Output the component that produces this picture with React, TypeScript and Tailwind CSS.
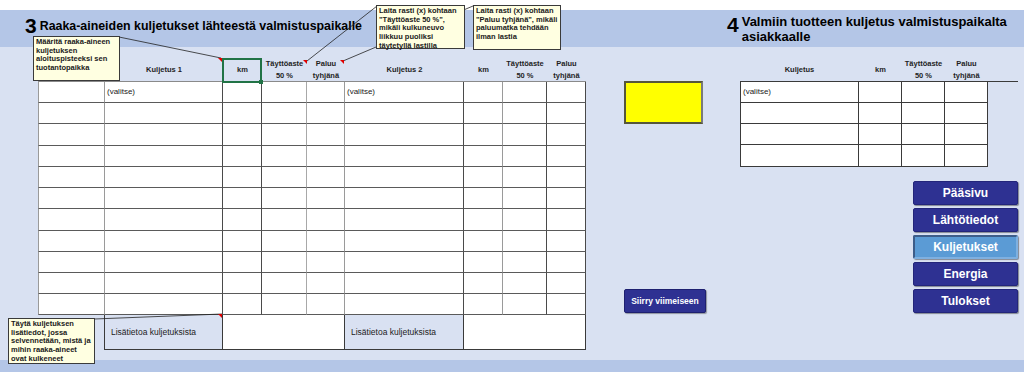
import React from "react";

const leftCols = [
  "w-[67px] border-l border-l-[#9a9a9a] border-r-[#9a9a9a]",
  "w-[118px] border-r-[#4a4a4a]",
  "w-[39px] border-r-[#4a4a4a]",
  "w-[45px] border-r-[#a8a8a8]",
  "w-[38px] border-r-[#9a9a9a]",
  "w-[119px] border-r-[#4a4a4a]",
  "w-[39px] border-r-[#9a9a9a]",
  "w-[44px] border-r-[#4a4a4a]",
  "w-[39px] border-r-[#4a4a4a]",
];

const leftHeads = [
  "",
  "Kuljetus 1",
  "km",
  "Täyttöaste\n50 %",
  "Paluu\ntyhjänä",
  "Kuljetus 2",
  "km",
  "Täyttöaste\n50 %",
  "Paluu\ntyhjänä",
];

const leftRows = [
  "h-[21px]", "h-[21px]", "h-[22px]", "h-[21px]", "h-[21px]", "h-[21px]",
  "h-[22px]", "h-[21px]", "h-[21px]", "h-[21px]", "h-[21px]",
];

const rightCols = [
  "w-[119px] border-l border-l-[#3a3a3a] border-r-[#3a3a3a]",
  "w-[43px] border-r-[#3a3a3a]",
  "w-[43px] border-r-[#3a3a3a]",
  "w-[43px] border-r-[#3a3a3a]",
];
const rightHeads = ["Kuljetus", "km", "Täyttöaste\n50 %", "Paluu\ntyhjänä"];
const rightRows = ["h-[21px]", "h-[21px]", "h-[21px]", "h-[22px]"];

const navButtons = ["Pääsivu", "Lähtötiedot", "Kuljetukset", "Energia", "Tulokset"];

function HeadCell({ w, text }: { w: string; text: string }) {
  return (
    <div className={`${w} flex items-center justify-center whitespace-pre-line text-center text-[7.5px] font-bold leading-[12px] text-[#1f1f1f]`}>
      {text}
    </div>
  );
}

function Note({ className, lines }: { className: string; lines: string[] }) {
  return (
    <div className={`absolute border border-[#3a3a3a] bg-[#ffffe1] px-[2px] pt-[1px] text-[7.5px] font-bold leading-[8.7px] text-[#1a1a1a] ${className}`}>
      {lines.map((l) => (
        <div key={l} className="whitespace-nowrap">{l}</div>
      ))}
    </div>
  );
}

export default function App() {
  return (
    <div className="relative flex h-[372px] w-[1024px] flex-col overflow-hidden bg-[#d9e1f2] font-['Liberation_Sans',Arial,sans-serif]">
      <div className="h-[10px] bg-white" />

      {/* title band */}
      <div className="flex h-[37px] bg-[#b4c6e7]">
        <div className="flex items-start pl-[25px] pt-[5px]">
          <span className="text-[21px] font-bold leading-[22px] text-black">3</span>
          <span className="ml-[3px] pt-[3px] text-[12.4px] font-bold leading-[16px] text-black">
            Raaka-aineiden kuljetukset lähteestä valmistuspaikalle
          </span>
        </div>
        <div className="ml-auto flex w-[297px] items-start pt-[4px]">
          <span className="text-[21px] font-bold leading-[22px] text-black">4</span>
          <span className="ml-[3px] text-[13px] font-bold leading-[15px] text-black">
            Valmiin tuotteen kuljetus valmistuspaikalta asiakkaalle
          </span>
        </div>
      </div>

      {/* body */}
      <div className="flex flex-1">
        {/* left table */}
        <div className="relative ml-[38px] mt-[11px] flex flex-col">
          <div className="flex h-[23px]">
            {leftCols.map((c, i) => (
              <HeadCell key={i} w={c.split(" ")[0]} text={leftHeads[i]} />
            ))}
          </div>
          <div className="border-t border-t-[#8a8a8a]">
            {leftRows.map((h, r) => (
              <div key={r} className={`flex ${h}`}>
                {leftCols.map((c, i) => (
                  <div
                    key={i}
                    className={`${c} flex items-center border-r border-b border-b-[#5a5a5a] bg-white pl-[2px] text-[8px] text-[#222]`}
                  >
                    {r === 0 && (i === 1 || i === 5) ? "(valitse)" : ""}
                  </div>
                ))}
              </div>
            ))}
          </div>
          <div className="flex h-[35px]">
            <div className="w-[66px]" />
            <div className="flex w-[119px] items-center border-l border-r border-b border-[#3a3a3a] bg-[#d9e1f2] pl-[6px] text-[8.5px] text-[#222]">
              Lisätietoa kuljetuksista
            </div>
            <div className="w-[122px] border-r border-b border-[#3a3a3a] bg-white" />
            <div className="flex w-[119px] items-center border-r border-b border-[#3a3a3a] bg-[#d9e1f2] pl-[6px] text-[8.5px] text-[#222]">
              Lisätietoa kuljetuksista
            </div>
            <div className="w-[122px] border-r border-b border-[#3a3a3a] bg-white" />
          </div>
          {/* selected cell */}
          <div className="absolute left-[184px] top-0 h-[25px] w-[40px] border-2 border-[#217346]">
            <div className="absolute -bottom-[3px] -right-[3px] h-[4px] w-[4px] bg-[#217346]" />
          </div>
        </div>

        {/* middle */}
        <div className="ml-[38px] flex flex-col">
          <div className="mt-[34px] h-[43px] w-[79px] border-2 border-[#56563a] border-r-[#7a7a7a] bg-[#ffff00]" />
          <button className="mt-[165px] h-[24px] w-[82px] rounded-[2px] border border-[#1e2070] bg-[#2e3192] text-[8.5px] font-bold text-white shadow-[1px_1px_1px_rgba(0,0,0,0.35)]">
            Siirry viimeiseen
          </button>
        </div>

        {/* right section */}
        <div className="ml-[34px] mt-[11px] flex flex-col">
          <div className="flex h-[23px]">
            {rightCols.map((c, i) => (
              <HeadCell key={i} w={c.split(" ")[0]} text={rightHeads[i]} />
            ))}
          </div>
          <div className="border-t border-t-[#3a3a3a]">
            {rightRows.map((h, r) => (
              <div key={r} className={`flex ${h}`}>
                {rightCols.map((c, i) => (
                  <div
                    key={i}
                    className={`${c} flex items-center border-r border-b border-b-[#3a3a3a] bg-white pl-[2px] text-[8px] text-[#222]`}
                  >
                    {r === 0 && i === 0 ? "(valitse)" : ""}
                  </div>
                ))}
              </div>
            ))}
          </div>
          <div className="ml-[173px] mt-[14px] flex flex-col gap-[3px]">
            {navButtons.map((b) => (
              <button
                key={b}
                className={`h-[24px] w-[105px] rounded-[2px] text-[12px] font-bold text-white shadow-[1px_1px_1px_rgba(0,0,0,0.4)] ${
                  b === "Kuljetukset"
                    ? "border-2 border-[#3d5d8a] border-b-[#7fb0e0] border-r-[#7fb0e0] bg-[#5b9bd5]"
                    : "border border-[#23257a] bg-[#2e3192]"
                }`}
              >
                {b}
              </button>
            ))}
          </div>
        </div>
      </div>

      <div className="h-[12px] bg-[#b4c6e7]" />

      {/* comment arrows and indicators */}
      <svg className="pointer-events-none absolute left-0 top-0" width="1024" height="372">
        <line x1="473" y1="6" x2="343" y2="61" stroke="#222" strokeWidth="0.8" />
        <line x1="377" y1="6" x2="307" y2="61" stroke="#222" strokeWidth="0.8" />
        <line x1="119" y1="37" x2="221" y2="58" stroke="#222" strokeWidth="0.8" />
        <line x1="94" y1="319" x2="222" y2="314" stroke="#222" strokeWidth="0.8" />
        <polygon points="218,58 222,58 222,62" fill="#e00000" />
        <polygon points="303,60 307,60 307,64" fill="#e00000" />
        <polygon points="340,60 344,60 344,64" fill="#e00000" />
        <polygon points="218,314 222,314 222,318" fill="#e00000" />
      </svg>

      <Note
        className="left-[33px] top-[36px] h-[45px] w-[87px]"
        lines={["Määritä raaka-aineen", "kuljetuksen", "aloituspisteeksi sen", "tuotantopaikka"]}
      />
      <Note
        className="left-[376px] top-[5px] h-[44px] w-[89px]"
        lines={["Laita rasti (x) kohtaan", "\"Täyttöaste 50 %\",", "mikäli kulkuneuvo", "liikkuu puoliksi", "täytetyllä lastilla"]}
      />
      <Note
        className="left-[473px] top-[5px] h-[45px] w-[88px]"
        lines={["Laita rasti (x) kohtaan", "\"Paluu tyhjänä\", mikäli", "paluumatka tehdään", "ilman lastia"]}
      />
      <Note
        className="left-[8px] top-[318px] h-[46px] w-[87px]"
        lines={["Täytä kuljetuksen", "lisätiedot, jossa", "selvennetään, mistä ja", "mihin raaka-aineet", "ovat kulkeneet"]}
      />
    </div>
  );
}
